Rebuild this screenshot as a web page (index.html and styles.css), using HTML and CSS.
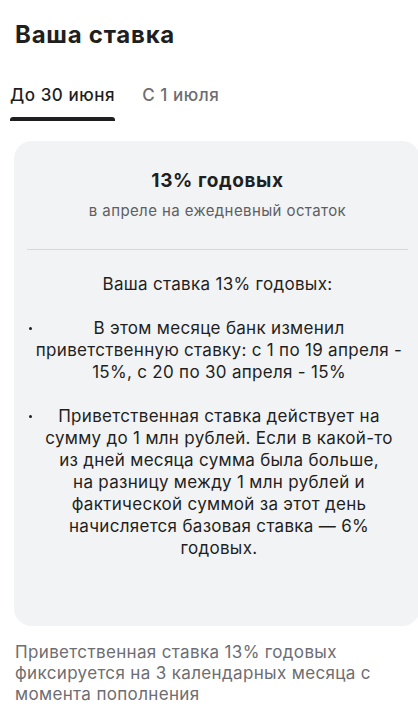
FILE: index.html
```html
<!DOCTYPE html>
<html lang="ru">
<head>
<meta charset="utf-8">
<link rel="stylesheet" href="styles.css">
</head>
<body>
<div class="page">
  <h1 class="title">Ваша ставка</h1>
  <div class="tabs">
    <div class="tab tab-active">До 30 июня</div>
    <div class="tab">С 1 июля</div>
  </div>
  <div class="card">
    <div class="rate">13% годовых</div>
    <div class="rate-sub">в апреле на ежедневный остаток</div>
    <div class="divider"></div>
    <p class="lead">Ваша ставка 13% годовых:</p>
    <ul class="list">
      <li>В этом месяце банк изменил приветственную ставку: с 1 по 19 апреля - 15%, с 20 по 30 апреля - 15%</li>
      <li>Приветственная ставка действует на сумму до 1 млн рублей. Если в какой-то из дней месяца сумма была больше,<br>на разницу между 1 млн рублей и фактической суммой за этот день начисляется базовая ставка — 6% годовых.</li>
    </ul>
  </div>
  <p class="note">Приветственная ставка 13% годовых фиксируется на 3 календарных месяца с момента пополнения</p>
</div>
</body>
</html>
```
FILE: styles.css
```css
html, body {
  margin: 0;
  padding: 0;
  background: #ffffff;
  overflow-x: hidden;
}
body {
  font-family: Inter, "Noto Sans", sans-serif;
  color: #1f1f22;
}
.page {
  width: 418px;
  padding-top: 20px;
}
.title {
  margin: 0 0 0 15px;
  font-size: 24px;
  line-height: 30px;
  font-weight: 700;
  letter-spacing: 0.75px;
}
.tabs {
  display: flex;
  gap: 27px;
  margin: 34px 0 0 10px;
}
.tab {
  font-size: 17px;
  line-height: 22px;
  font-weight: 500;
  letter-spacing: 0.55px;
  color: #6d6d72;
  padding-bottom: 11px;
  position: relative;
}
.tab-active {
  color: #1f1f22;
}
.tab-active::after {
  content: "";
  position: absolute;
  left: 0;
  right: 0;
  bottom: -4px;
  height: 4px;
  background: #1f1f22;
  border-radius: 3px 3px 0 0;
}
.card {
  margin: 24px -2px 0 14px;
  background: #f2f3f5;
  border-radius: 18px;
  padding: 28px 12px 67px 13px;
  text-align: center;
}
.rate {
  font-size: 19px;
  line-height: 24px;
  font-weight: 700;
  letter-spacing: 0.6px;
}
.rate-sub {
  margin-top: 8px;
  font-size: 15px;
  line-height: 20px;
  letter-spacing: 0.4px;
  color: #5e5e63;
}
.divider {
  height: 1px;
  background: #d8d8dc;
  margin-top: 28px;
}
.lead {
  margin: 23px 0 0;
  font-size: 17px;
  line-height: 22px;
  letter-spacing: 0.3px;
}
.list {
  list-style: none;
  margin: 22px 0 0;
  padding: 0 4px 0 7px;
  font-size: 17px;
  line-height: 22px;
  letter-spacing: 0.3px;
}
.list li {
  position: relative;
  margin-bottom: 22px;
}
.list li::before {
  content: "";
  position: absolute;
  left: -5px;
  top: 10px;
  width: 3px;
  height: 3px;
  border-radius: 50%;
  background: #1f1f22;
}
.list li:last-child {
  margin-bottom: 0;
}
.note {
  margin: 16px 10px 0 15px;
  font-size: 17px;
  line-height: 21px;
  letter-spacing: 0.35px;
  color: #6d6d72;
}
```
